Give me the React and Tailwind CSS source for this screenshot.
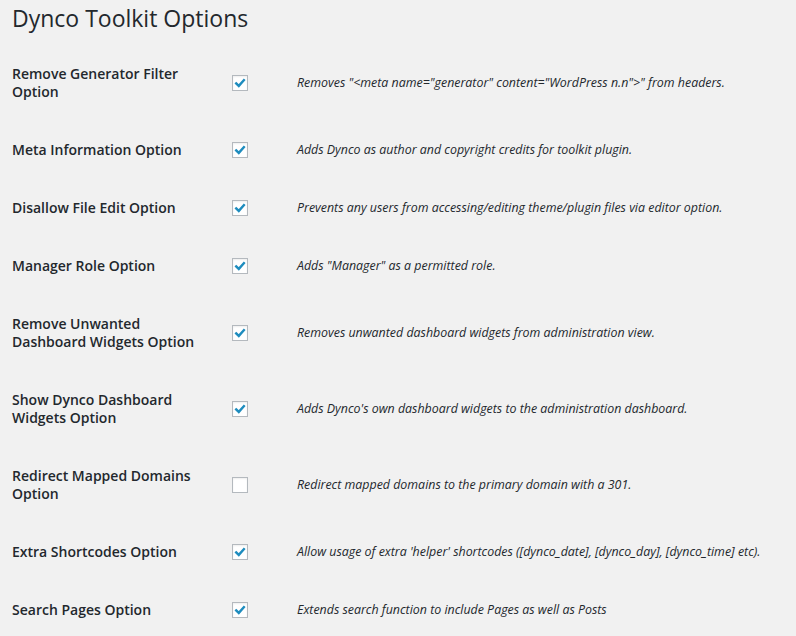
const options = [
  { label: 'Remove Generator Filter Option', checked: true, desc: 'Removes "<meta name="generator" content="WordPress n.n">" from headers.' },
  { label: 'Meta Information Option', checked: true, desc: 'Adds Dynco as author and copyright credits for toolkit plugin.' },
  { label: 'Disallow File Edit Option', checked: true, desc: 'Prevents any users from accessing/editing theme/plugin files via editor option.' },
  { label: 'Manager Role Option', checked: true, desc: 'Adds "Manager" as a permitted role.' },
  { label: 'Remove Unwanted Dashboard Widgets Option', checked: true, desc: 'Removes unwanted dashboard widgets from administration view.' },
  { label: 'Show Dynco Dashboard Widgets Option', checked: true, desc: "Adds Dynco's own dashboard widgets to the administration dashboard." },
  { label: 'Redirect Mapped Domains Option', checked: false, desc: 'Redirect mapped domains to the primary domain with a 301.' },
  { label: 'Extra Shortcodes Option', checked: true, desc: "Allow usage of extra 'helper' shortcodes ([dynco_date], [dynco_day], [dynco_time] etc)." },
  { label: 'Search Pages Option', checked: true, desc: 'Extends search function to include Pages as well as Posts' },
];

function Checkbox({ checked }) {
  return (
    <div className="w-4 h-4 bg-white border border-[#b4b9be] shadow-[inset_0_1px_2px_rgba(0,0,0,0.07)] flex items-center justify-center">
      {checked && (
        <svg width="14" height="14" viewBox="0 0 14 14">
          <path d="M3.2 7.4 L5.8 9.9 L10.9 4.2" fill="none" stroke="#1e8cbe" strokeWidth="2.4" strokeLinecap="square" />
        </svg>
      )}
    </div>
  );
}

export default function App() {
  return (
    <div className="min-h-[636px] bg-[#f1f1f1] pl-3 pt-[3px] text-[#23282d]" style={{ fontFamily: '"Open Sans", sans-serif' }}>
      <h1 className="text-[23px] leading-[30px] font-normal">Dynco Toolkit Options</h1>
      <div className="mt-3">
        {options.map(o => (
          <div key={o.label} className="flex">
            <div className="w-[210px] pr-[10px] py-5 text-[14px] leading-[18px] font-semibold shrink-0">{o.label}</div>
            <div className="w-[75px] pl-[10px] self-center shrink-0">
              <Checkbox checked={o.checked} />
            </div>
            <div className="self-center text-[12.4px] font-medium italic text-[#23282d]">{o.desc}</div>
          </div>
        ))}
      </div>
    </div>
  );
}
